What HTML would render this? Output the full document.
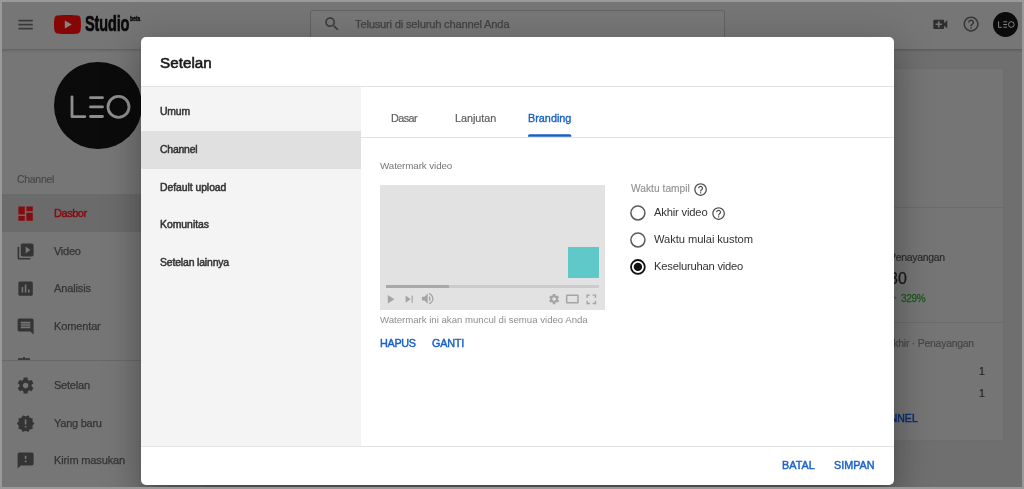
<!DOCTYPE html>
<html lang="id">
<head>
<meta charset="utf-8">
<title>YouTube Studio - Setelan</title>
<style>
*{box-sizing:border-box;margin:0;padding:0}
html,body{width:1024px;height:489px;overflow:hidden;background:#6f6f6f}
body{font-family:"Liberation Sans",sans-serif;color:#333;-webkit-font-smoothing:antialiased}
#app{position:relative;width:1024px;height:489px;overflow:hidden;background:#6f6f6f}
.abs{position:absolute}
.t{position:absolute;white-space:nowrap;line-height:1;will-change:transform}
svg{position:absolute;display:block}
/* ---------- dimmed background page ---------- */
#header{left:0;top:0;width:1024px;height:49px;background:#767676;box-shadow:0 1px 3px rgba(0,0,0,.22);z-index:2}
#sidebar{left:0;top:49px;width:204px;height:440px;background:#767676;z-index:1}
#searchbox{left:310px;top:10px;width:415px;height:30px;border:1px solid #636363;border-radius:3px;background:#787878}
.navrow{position:absolute;left:0;width:204px;height:37.6px}
.navlabel{font-size:11.6px;color:#343434;left:54px;-webkit-text-stroke:.25px #343434}
#card{left:700px;top:68px;width:304px;height:372.5px;background:#757575;border:1px solid #6d6d6d}
.hr{position:absolute;height:1px;background:#6b6b6b}
/* ---------- modal ---------- */
#modal{left:141px;top:37px;width:752.6px;height:448.4px;background:#fff;border-radius:5px;overflow:hidden;z-index:5;box-shadow:0 19px 30px 2.4px rgba(0,0,0,.14),0 7px 37px 6.4px rgba(0,0,0,.16),0 9px 12px -5.6px rgba(0,0,0,.2)}
#mnav{left:0;top:50px;width:219.5px;height:358.5px;background:#f4f4f4}
.mitem{font-size:12px;color:#333;left:19px;-webkit-text-stroke:.5px currentColor}
.tab{font-size:12px;color:#606060;-webkit-text-stroke:.2px #606060}
.radio{position:absolute;width:15px;height:15px;border-radius:50%;border:1.6px solid #555}
.rlabel{font-size:12px;color:#333;left:513px}
.btn{font-size:11.2px;color:#1a62c9}
.med{font-weight:normal;-webkit-text-stroke:.45px currentColor}
/*FIT-START*/
#searchtxt{font-size:11.2px!important;letter-spacing:-0.209px;top:19.00px!important;left:354.50px!important}
#lblchannel{font-size:10.4px!important;letter-spacing:-0.234px;top:175.00px!important;left:16.60px!important}
#n1{font-size:11.0px!important;letter-spacing:-0.462px;top:208.00px!important;left:54.20px!important}
#n2{font-size:11.0px!important;letter-spacing:-0.273px;top:246.00px!important;left:54.30px!important}
#n3{font-size:11.0px!important;letter-spacing:-0.132px;top:283.00px!important;left:54.30px!important}
#n4{font-size:11.0px!important;letter-spacing:-0.129px;top:321.00px!important;left:54.20px!important}
#n5{font-size:11.0px!important;letter-spacing:-0.214px;top:380.00px!important;left:54.30px!important}
#n6{font-size:11.0px!important;letter-spacing:-0.251px;top:418.00px!important;left:54.20px!important}
#n7{font-size:11.0px!important;letter-spacing:-0.128px;top:455.00px!important;left:54.20px!important}
#c3{font-size:10.0px!important;letter-spacing:-0.273px;top:294.00px!important;left:900.60px!important}
#mtitle{font-size:15.2px!important;letter-spacing:0.042px;top:18.00px!important;left:19.40px!important}
#m1{font-size:10.4px!important;letter-spacing:-0.180px;top:70.00px!important;left:18.80px!important}
#m2{font-size:10.4px!important;letter-spacing:-0.191px;top:108.00px!important;left:18.80px!important}
#m3{font-size:10.4px!important;letter-spacing:-0.050px;top:146.00px!important;left:18.80px!important}
#m4{font-size:10.4px!important;letter-spacing:-0.005px;top:183.00px!important;left:18.80px!important}
#m5{font-size:10.4px!important;letter-spacing:-0.139px;top:221.00px!important;left:18.80px!important}
#t1{font-size:10.8px!important;letter-spacing:-0.559px;top:76.00px!important;left:250.30px!important}
#t2{font-size:10.8px!important;letter-spacing:-0.019px;top:76.00px!important;left:314.00px!important}
#t3{font-size:10.8px!important;letter-spacing:0.021px;top:76.00px!important;left:387.00px!important}
#wlabel{font-size:9.8px!important;letter-spacing:-0.100px;top:124.00px!important;left:238.80px!important}
#wcap{font-size:9.6px!important;letter-spacing:0.002px;top:278.00px!important;left:238.60px!important}
#b1{font-size:10.8px!important;letter-spacing:-0.282px;top:301.00px!important;left:239.00px!important}
#b2{font-size:10.8px!important;letter-spacing:-0.215px;top:301.00px!important;left:291.30px!important}
#wt{font-size:10.2px!important;letter-spacing:0.033px;top:147.00px!important;left:490.00px!important}
#r1{font-size:11.2px!important;letter-spacing:-0.173px;top:170.00px!important;left:513.00px!important}
#r2{font-size:11.2px!important;letter-spacing:-0.075px;top:197.00px!important;left:513.00px!important}
#r3{font-size:11.2px!important;letter-spacing:-0.211px;top:224.00px!important;left:513.00px!important}
#b3{font-size:10.8px!important;letter-spacing:0.050px;top:423.00px!important;left:640.90px!important}
#b4{font-size:10.8px!important;letter-spacing:-0.011px;top:423.00px!important;left:693.00px!important}
/*FIT-END*/
#frame{left:0;top:0;width:1024px;height:489px;box-shadow:inset 0 0 0 2px #9a9a9a;z-index:20;pointer-events:none}
</style>
</head>
<body>
<div id="app">

<!-- ================= HEADER ================= -->
<div id="header" class="abs">
  <svg style="left:16.4px;top:14.9px" width="19.2" height="19.2" viewBox="0 0 24 24"><path fill="#3a3a3a" d="M3 18h18v-2H3v2zm0-5h18v-2H3v2zm0-7v2h18V6H3z"/></svg>
  <!-- YouTube logo -->
  <svg style="left:54px;top:14.5px" width="27" height="19" viewBox="0 0 27 19"><path fill="#860606" d="M26.4 3c-.3-1.2-1.200-2.100-2.400-2.400C21.900 0 13.500 0 13.500 0S5.100 0 3 .6C1.800.9.900 1.800.6 3 0 5.100 0 9.500 0 9.500s0 4.400.6 6.500c.3 1.200 1.200 2.100 2.400 2.400 2.100.6 10.500.6 10.500.6s8.400 0 10.500-.6c1.200-.3 2.100-1.200 2.400-2.400.6-2.100.6-6.500.6-6.500s0-4.400-.6-6.500z"/><path fill="#858585" d="M10.800 13.600l7-4.100-7-4.100z"/></svg>
  <div class="t" id="studio" style="left:85px;top:13.2px;font-size:22.6px;font-weight:bold;color:#0a0a0a;-webkit-text-stroke:.7px #0a0a0a;transform-origin:0 0;transform:scaleX(.64);letter-spacing:-.2px">Studio</div>
  <div class="t" id="beta" style="left:130px;top:14.5px;font-size:7px;font-weight:bold;color:#111;-webkit-text-stroke:.5px #111;transform-origin:0 0;transform:scaleX(.7)">beta</div>

  <div id="searchbox" class="abs"></div>
  <svg style="left:322.55px;top:15.25px" width="18" height="18" viewBox="0 0 24 24"><path fill="#3a3a3a" d="M15.5 14h-.79l-.28-.27C15.410 12.590 16 11.110 16 9.500 16 5.910 13.090 3 9.500 3S3 5.910 3 9.500 5.910 16 9.500 16c1.610 0 3.090-.590 4.230-1.570l.27.280v.79l5 4.990L20.490 19l-4.990-5zm-6 0C7.010 14 5 11.990 5 9.500S7.010 5 9.500 5 14 7.010 14 9.500 11.990 14 9.500 14z"/></svg>
  <div class="t" id="searchtxt" style="left:354.5px;top:18.7px;font-size:11.2px;color:#424242;-webkit-text-stroke:.25px #424242">Telusuri di seluruh channel Anda</div>

  <!-- video call -->
  <svg style="left:930.8px;top:14.9px" width="18.6" height="18.6" viewBox="0 0 24 24"><path fill="#2e2e2e" d="M17 10.500V7c0-.550-.450-1-1-1H4c-.550 0-1 .450-1 1v10c0 .550.450 1 1 1h12c.550 0 1-.450 1-1v-3.500l4 4v-11l-4 4zM14 13h-3v3H9v-3H6v-2h3V8h2v3h3v2z"/></svg>
  <!-- help -->
  <svg style="left:962.3px;top:14.9px" width="18.2" height="18.2" viewBox="0 0 24 24"><path fill="#363636" d="M11 18h2v-2h-2v2zm1-16C6.480 2 2 6.480 2 12s4.480 10 10 10 10-4.480 10-10S17.520 2 12 2zm0 18c-4.410 0-8-3.590-8-8s3.590-8 8-8 8 3.590 8 8-3.590 8-8 8zm0-14c-2.210 0-4 1.790-4 4h2c0-1.100.9-2 2-2s2 .9 2 2c0 2-3 1.750-3 5h2c0-2.250 3-2.500 3-5 0-2.210-1.790-4-4-4z"/></svg>
  <!-- avatar -->
  <div class="abs" style="left:993.3px;top:11.7px;width:25.2px;height:25.2px;border-radius:50%;background:#0b0b0b"></div>
  <svg style="left:998px;top:20px" width="17" height="9" viewBox="0 0 60 24"><g fill="none" stroke="#8c8c8c" stroke-width="3.2"><path d="M2 1v21h11"/><path d="M19 2.500h13M19 12h13M19 21.500h13"/><circle cx="47" cy="12" r="10"/></g></svg>
</div>

<!-- ================= SIDEBAR ================= -->
<div id="sidebar" class="abs"></div>
<div class="abs" style="left:0;top:0;width:204px;height:489px;z-index:3">
  <!-- channel avatar -->
  <div class="abs" style="left:54px;top:61.600px;width:87.600px;height:87.600px;border-radius:50%;background:#0b0b0b"></div>
  <svg style="left:60px;top:90px" width="80" height="35" viewBox="60 90 80 35"><g fill="none" stroke="#8f8f8f" stroke-width="2.800" stroke-linecap="round" stroke-linejoin="round"><path d="M72 96.800V116.700H84.800"/><path d="M90.500 97.700H102.500M90.500 106.900H102.500M90.500 116.500H102.500"/><circle cx="118.500" cy="106.900" r="10.500"/></g></svg>
  <div class="t" id="lblchannel" style="left:16px;top:174px;font-size:10.6px;color:#474747;-webkit-text-stroke:.15px #474747">Channel</div>

  <div class="navrow" style="top:194.400px;background:#6b6b6b"></div>
  <svg style="left:16.2px;top:203.800px" width="19.2" height="19.2" viewBox="0 0 24 24"><path fill="#860b0e" d="M3 13h8V3H3v10zm0 8h8v-6H3v6zm10 0h8V11h-8v10zm0-18v6h8V3h-8z"/></svg>
  <div class="t navlabel" id="n1" style="top:207px;color:#860b0e;-webkit-text-stroke:.42px #860b0e">Dasbor</div>

  <svg style="left:16.3px;top:242.000px" width="19.2" height="19.2" viewBox="0 0 24 24"><path fill="#343434" d="M4 6H2v14c0 1.100.9 2 2 2h14v-2H4V6zm16-4H8c-1.100 0-2 .9-2 2v12c0 1.100.9 2 2 2h12c1.100 0 2-.9 2-2V4c0-1.100-.9-2-2-2zm-8 12.500v-9l6 4.500-6 4.500z"/></svg>
  <div class="t navlabel" id="n2" style="top:244.600px">Video</div>

  <svg style="left:16.3px;top:279.200px" width="19.2" height="19.2" viewBox="0 0 24 24"><path fill="#343434" d="M19 3H5c-1.100 0-2 .9-2 2v14c0 1.100.9 2 2 2h14c1.100 0 2-.9 2-2V5c0-1.100-.9-2-2-2zM9 17H7v-7h2v7zm4 0h-2V7h2v10zm4 0h-2v-4h2v4z"/></svg>
  <div class="t navlabel" id="n3" style="top:282.200px">Analisis</div>

  <svg style="left:16.3px;top:316.800px" width="19.2" height="19.2" viewBox="0 0 24 24"><path fill="#343434" d="M21.990 4c0-1.100-.890-2-1.990-2H4c-1.100 0-2 .9-2 2v12c0 1.100.9 2 2 2h14l4 4-.010-18zM18 14H6v-2h12v2zm0-3H6V9h12v2zm0-3H6V6h12v2z"/></svg>
  <div class="t navlabel" id="n4" style="top:319.800px">Komentar</div>

  <!-- partially hidden 5th item -->
  <div class="abs" style="left:17.800px;top:358.300px;width:12.400px;height:1.600px;background:#3c3c3c"></div>
  <div class="abs" style="left:23px;top:356.800px;width:2px;height:2px;background:#3c3c3c"></div>

  <div class="hr" style="left:0;top:360px;width:204px;background:#696969"></div>

  <svg style="left:16.2px;top:375.600px" width="19.2" height="19.2" viewBox="0 0 24 24"><path fill="#343434" d="M19.430 12.980c.040-.320.070-.640.070-.980s-.030-.660-.070-.980l2.110-1.650c.190-.150.240-.420.120-.640l-2-3.460c-.120-.220-.390-.300-.610-.220l-2.490 1c-.520-.400-1.080-.730-1.690-.980l-.380-2.650C14.460 2.180 14.250 2 14 2h-4c-.250 0-.460.180-.490.420l-.380 2.650c-.610.250-1.170.590-1.690.98l-2.490-1c-.230-.090-.490 0-.610.220l-2 3.460c-.130.220-.070.490.12.640l2.110 1.650c-.040.320-.070.650-.070.980s.030.660.070.980l-2.110 1.650c-.190.150-.240.420-.12.640l2 3.460c.120.220.39.300.61.220l2.490-1c.520.400 1.080.730 1.690.98l.38 2.650c.030.240.240.420.490.420h4c.250 0 .460-.180.490-.420l.38-2.650c.610-.250 1.170-.590 1.690-.980l2.490 1c.230.090.490 0 .610-.220l2-3.460c.120-.220.070-.490-.120-.640l-2.110-1.650zM12 15.500c-1.930 0-3.500-1.570-3.500-3.500s1.570-3.500 3.500-3.500 3.500 1.570 3.500 3.500-1.570 3.500-3.500 3.500z"/></svg>
  <div class="t navlabel" id="n5" style="top:378.200px">Setelan</div>

  <svg style="left:16.4px;top:413.600px" width="19.2" height="19.2" viewBox="0 0 24 24"><path fill="#343434" d="M23 12l-2.440-2.780.34-3.680-3.610-.820-1.890-3.180L12 3 8.600 1.540 6.710 4.720l-3.610.81.34 3.680L1 12l2.440 2.780-.34 3.690 3.610.82 1.890 3.180L12 21l3.400 1.460 1.890-3.180 3.610-.82-.34-3.680L23 12zm-10 5h-2v-2h2v2zm0-4h-2V7h2v6z"/></svg>
  <div class="t navlabel" id="n6" style="top:416.600px">Yang baru</div>

  <svg style="left:16.3px;top:451.000px" width="19.2" height="19.2" viewBox="0 0 24 24"><path fill="#343434" d="M20 2H4c-1.100 0-1.990.9-1.990 2L2 22l4-4h14c1.100 0 2-.9 2-2V4c0-1.100-.9-2-2-2zm-7 12h-2v-2h2v2zm0-4h-2V6h2v4z"/></svg>
  <div class="t navlabel" id="n7" style="top:454px">Kirim masukan</div>
</div>

<!-- ================= MAIN CARD (behind modal) ================= -->
<div id="card" class="abs"></div>
<div class="hr" style="left:700px;top:207px;width:304px"></div>
<div class="hr" style="left:700px;top:322px;width:304px"></div>
<div class="t" id="c1" style="right:78.7px;top:252.500px;font-size:10.4px;letter-spacing:-.25px;color:#2b2b2b;-webkit-text-stroke:.2px #2b2b2b">Penayangan</div>
<div class="t" id="c2" style="right:117px;top:270.500px;font-size:16px;color:#1c1c1c;-webkit-text-stroke:.3px #1c1c1c">30</div>
<div class="t" id="c3" style="left:900.600px;top:294px;font-size:10.4px;color:#1c5a20;-webkit-text-stroke:.3px #1c5a20">329%</div>
<svg style="left:888.5px;top:293.5px" width="9" height="9" viewBox="0 0 24 24"><path fill="#1c5a20" d="M4 12l1.410 1.410L11 7.830V20h2V7.830l5.580 5.590L20 12l-8-8-8 8z"/></svg>
<div class="t" id="c4" style="right:50.1px;top:338.500px;font-size:10.4px;letter-spacing:-.22px;color:#454545;-webkit-text-stroke:.15px #454545">Terakhir · Penayangan</div>
<div class="t" id="c5" style="left:979.300px;top:366px;font-size:10.6px;color:#262626;-webkit-text-stroke:.2px #262626">1</div>
<div class="t" id="c6" style="left:979.300px;top:388.400px;font-size:10.6px;color:#262626;-webkit-text-stroke:.2px #262626">1</div>
<div class="t" id="c7" style="right:106.2px;top:412.500px;font-size:10.5px;-webkit-text-stroke:.5px #0a2e6e;color:#0a2e6e">BUKA ANALISIS CHANNEL</div>

<!-- ================= MODAL ================= -->
<div id="modal" class="abs">
  <div class="t" id="mtitle" style="left:19.3px;top:17.500px;font-size:16.400px;-webkit-text-stroke:.6px #1a1a1a;color:#1a1a1a">Setelan</div>
  <div class="hr" style="left:0;top:49px;width:753px;background:#e3e3e3"></div>

  <div id="mnav" class="abs"></div>
  <div class="abs" style="left:0;top:94px;width:219.500px;height:37.600px;background:#e0e0e0"></div>
  <div class="t mitem" id="m1" style="top:69px">Umum</div>
  <div class="t mitem" id="m2" style="top:106.600px">Channel</div>
  <div class="t mitem" id="m3" style="top:144.200px">Default upload</div>
  <div class="t mitem" id="m4" style="top:181.800px">Komunitas</div>
  <div class="t mitem" id="m5" style="top:219.400px">Setelan lainnya</div>

  <!-- tabs -->
  <div class="t tab" id="t1" style="left:250px;top:75px">Dasar</div>
  <div class="t tab" id="t2" style="left:314px;top:75px">Lanjutan</div>
  <div class="t tab" id="t3" style="left:387px;top:75px;color:#1a5fc6;-webkit-text-stroke:.35px #1a5fc6">Branding</div>
  <svg style="left:386px;top:96px" width="46" height="5" viewBox="0 0 46 5"><path fill="#1a5fc6" d="M1 3.700V2.900Q1 1.300 2.600 1.300H42.800Q44.400 1.300 44.400 2.900V3.700z"/></svg>
  <div class="hr" style="left:219.500px;top:99.500px;width:534px;background:#e3e3e3"></div>

  <div class="t" id="wlabel" style="left:238.800px;top:123px;font-size:10.4px;color:#777">Watermark video</div>

  <!-- video preview -->
  <div class="abs" style="left:238.800px;top:147.500px;width:225.400px;height:125px;background:#e2e2e2"></div>
  <div class="abs" style="left:427px;top:210px;width:31px;height:31.400px;background:#5fc8c8"></div>
  <div class="abs" style="left:244.600px;top:247.800px;width:213.400px;height:3px;background:#cbcbcb"></div>
  <div class="abs" style="left:244.600px;top:247.800px;width:63px;height:3px;background:#a9a9a9"></div>
  <!-- controls -->
  <svg style="left:242px;top:254.6px" width="14.4" height="14.4" viewBox="0 0 24 24"><path fill="#a4a4a4" d="M8 5v14l11-7z"/></svg>
  <svg style="left:261px;top:254.6px" width="14.4" height="14.4" viewBox="0 0 24 24"><path fill="#a4a4a4" d="M6 18l8.500-6L6 6v12zM16 6v12h2V6h-2z"/></svg>
  <svg style="left:279.25px;top:254.05px" width="15.4" height="15.4" viewBox="0 0 24 24"><path fill="#a4a4a4" d="M3 9v6h4l5 5V4L7 9H3zm13.500 3c0-1.770-1.020-3.290-2.500-4.030v8.050c1.480-.730 2.500-2.250 2.500-4.020zM14 3.230v2.060c2.890.86 5 3.540 5 6.710s-2.110 5.850-5 6.710v2.060c4.010-.910 7-4.490 7-8.770s-2.990-7.860-7-8.770z"/></svg>
  <svg style="left:406.5px;top:255.5px" width="12.2" height="12.2" viewBox="0 0 24 24"><path fill="#a4a4a4" d="M19.430 12.980c.040-.320.070-.640.070-.980s-.030-.660-.070-.980l2.110-1.650c.190-.150.240-.420.120-.640l-2-3.460c-.120-.220-.390-.300-.610-.220l-2.490 1c-.520-.400-1.080-.730-1.690-.980l-.380-2.650C14.460 2.180 14.250 2 14 2h-4c-.250 0-.460.180-.490.420l-.380 2.650c-.610.250-1.170.590-1.690.98l-2.490-1c-.230-.090-.490 0-.610.220l-2 3.460c-.130.220-.070.490.12.640l2.110 1.650c-.040.320-.070.650-.070.980s.030.660.070.980l-2.110 1.650c-.190.150-.240.420-.12.640l2 3.460c.120.220.39.300.61.220l2.490-1c.520.400 1.080.730 1.690.98l.38 2.650c.030.240.240.420.490.420h4c.250 0 .460-.180.490-.420l.38-2.650c.610-.250 1.170-.590 1.690-.980l2.490 1c.230.090.490 0 .610-.220l2-3.460c.120-.220.070-.490-.120-.640l-2.110-1.650zM12 15.500c-1.930 0-3.500-1.570-3.500-3.500s1.570-3.500 3.500-3.500 3.500 1.570 3.500 3.500-1.570 3.500-3.500 3.500z"/></svg>
  <svg style="left:424px;top:256px" width="15" height="12" viewBox="0 0 15 12"><rect x="1.650" y="2.150" width="11.350" height="7.600" rx=".6" fill="none" stroke="#a4a4a4" stroke-width="1.500"/></svg>
  <svg style="left:441.8px;top:253.650px" width="16.600" height="16.600" viewBox="0 0 24 24"><path fill="#a4a4a4" d="M7 14H5v5h5v-2H7v-3zm-2-4h2V7h3V5H5v5zm12 7h-3v2h5v-5h-2v3zM14 5v2h3v3h2V5h-5z"/></svg>

  <div class="t" id="wcap" style="left:238.800px;top:278.200px;font-size:9.600px;color:#8e8e8e">Watermark ini akan muncul di semua video Anda</div>
  <div class="t btn med" id="b1" style="left:238.800px;top:300.500px">HAPUS</div>
  <div class="t btn med" id="b2" style="left:291px;top:300.500px">GANTI</div>

  <!-- display time -->
  <div class="t" id="wt" style="left:489.800px;top:147.500px;font-size:10.4px;color:#929292;-webkit-text-stroke:.15px #929292">Waktu tampil</div>
  <svg style="left:551.650px;top:145.350px" width="15.200" height="15.200" viewBox="0 0 24 24"><path fill="#505050" d="M11 18h2v-2h-2v2zm1-16C6.480 2 2 6.480 2 12s4.480 10 10 10 10-4.480 10-10S17.520 2 12 2zm0 18c-4.410 0-8-3.590-8-8s3.590-8 8-8 8 3.590 8 8-3.590 8-8 8zm0-14c-2.210 0-4 1.790-4 4h2c0-1.100.9-2 2-2s2 .9 2 2c0 2-3 1.750-3 5h2c0-2.250 3-2.500 3-5 0-2.210-1.790-4-4-4z"/></svg>

  <svg style="left:488px;top:167.3px" width="18" height="18" viewBox="0 0 18 18"><circle cx="8.9" cy="8.9" r="7" fill="none" stroke="#5a5a5a" stroke-width="1.5"/></svg>
  <div class="t rlabel" id="r1" style="top:169.800px">Akhir video</div>
  <svg style="left:569.550px;top:168.900px" width="15.200" height="15.200" viewBox="0 0 24 24"><path fill="#505050" d="M11 18h2v-2h-2v2zm1-16C6.480 2 2 6.480 2 12s4.480 10 10 10 10-4.480 10-10S17.520 2 12 2zm0 18c-4.410 0-8-3.590-8-8s3.590-8 8-8 8 3.590 8 8-3.590 8-8 8zm0-14c-2.210 0-4 1.790-4 4h2c0-1.100.9-2 2-2s2 .9 2 2c0 2-3 1.750-3 5h2c0-2.250 3-2.500 3-5 0-2.210-1.790-4-4-4z"/></svg>

  <svg style="left:488px;top:194px" width="18" height="18" viewBox="0 0 18 18"><circle cx="8.9" cy="8.9" r="7" fill="none" stroke="#5a5a5a" stroke-width="1.5"/></svg>
  <div class="t rlabel" id="r2" style="top:196.200px">Waktu mulai kustom</div>

  <svg style="left:488px;top:220.8px" width="18" height="18" viewBox="0 0 18 18"><circle cx="8.9" cy="8.9" r="6.9" fill="none" stroke="#111" stroke-width="1.8"/><circle cx="8.9" cy="8.9" r="4.2" fill="#111"/></svg>
  <div class="t rlabel" id="r3" style="top:222.600px">Keseluruhan video</div>

  <!-- footer -->
  <div class="hr" style="left:0;top:408.500px;width:753px;background:#e3e3e3"></div>
  <div class="t btn med" id="b3" style="left:640.600px;top:423px">BATAL</div>
  <div class="t btn med" id="b4" style="left:693.300px;top:423px">SIMPAN</div>
</div>

<div id="frame" class="abs"></div>
</div>
</body>
</html>
